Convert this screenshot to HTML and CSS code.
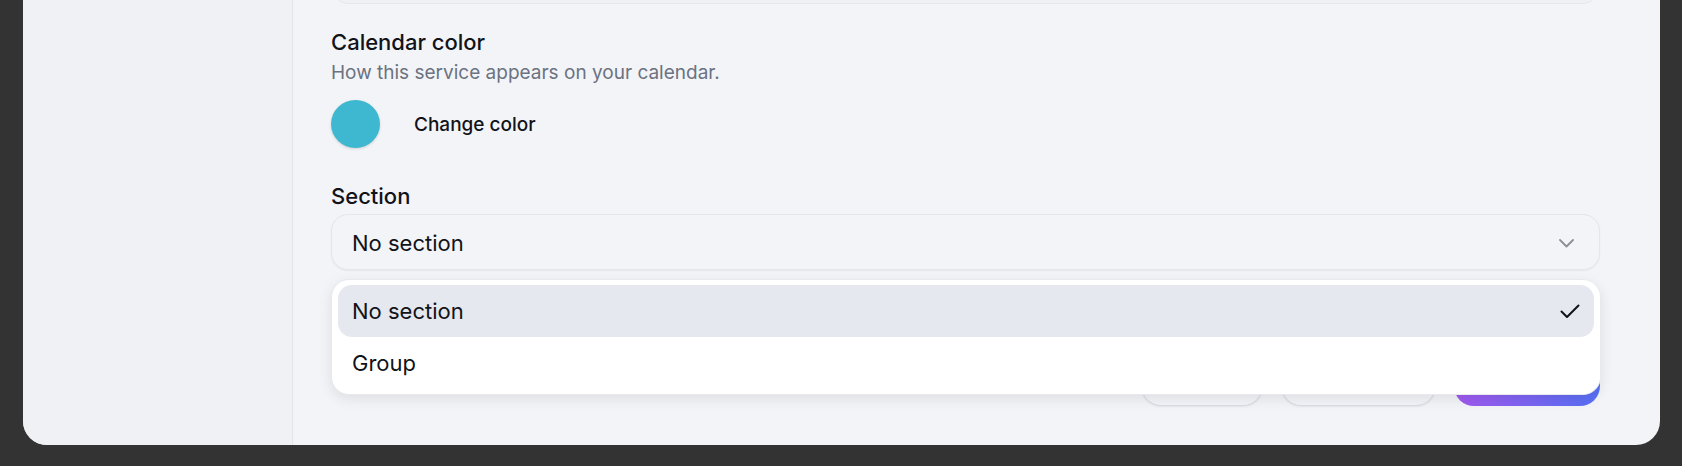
FILE: index.html
```html
<!DOCTYPE html>
<html lang="en">
<head>
<meta charset="UTF-8" />
<meta name="viewport" content="width=device-width, initial-scale=1" />
<title>Edit service</title>
<link rel="stylesheet" href="styles.css">
</head>
<body>
  <div class="card">
    <aside class="sidebar"></aside>

    <main class="panel">
      <div class="prev-field"></div>

      <section class="field">
        <h3 class="field-title">Calendar color</h3>
        <p class="field-hint">How this service appears on your calendar.</p>
        <div class="color-row">
          <span class="swatch"></span>
          <button class="link-btn" type="button">Change color</button>
        </div>
      </section>

      <section class="field">
        <label class="field-title section-label">Section</label>
        <div class="select-wrap">
          <div class="select">
            <span>No section</span>
            <svg class="chevron" width="15" height="9" viewBox="0 0 15 9">
              <path d="M1 1 L7.5 7.5 L14 1" fill="none" stroke="#8b8f98" stroke-width="1.8" stroke-linecap="round" stroke-linejoin="round"/>
            </svg>
          </div>
          <ul class="menu">
            <li class="option selected">
              <span>No section</span>
              <svg class="check" width="20" height="15" viewBox="0 0 20 15">
                <path d="M1.5 7.5 L7 13 L18.5 1.5" fill="none" stroke="#111318" stroke-width="2" stroke-linecap="round" stroke-linejoin="round"/>
              </svg>
            </li>
            <li class="option">Group</li>
          </ul>
        </div>
      </section>

      <div class="actions">
        <button class="btn btn-ghost btn-delete" type="button">Delete</button>
        <button class="btn btn-ghost btn-dup" type="button">Duplicate</button>
        <button class="btn btn-primary" type="button">Save</button>
      </div>
    </main>
  </div>
</body>
</html>
```

FILE: styles.css
```css
* {
  box-sizing: border-box;
}
body {
  margin: 0; padding: 0;
  height: 466px;
  background: #333333;
  font-family: Inter, "Noto Sans", sans-serif;
  color: #111318;
  overflow: hidden;
}
.card {
  display: grid;
  grid-template-columns: 270px 1fr;
  height: 445px;
  margin: 0 22px 0 23px;
  background: #f3f4f8;
  border-radius: 0 0 24px 24px;
  overflow: hidden;
}
.sidebar {
  background: #eff1f5;
  border-right: 1px solid #e3e5ea;
}
.panel {
  display: flex;
  flex-direction: column;
  padding: 0 60px 0 38px;
}

/* bottom edge of the field above, scrolled mostly out of view */
.prev-field {
  height: 40px;
  margin-top: -36px;
  border-bottom: 1px solid #e6e7ec;
  border-radius: 18px;
  background: #eff0f4;
}

.field-title {
  display: block;
  margin: 24px 0 0;
  font-size: 22px;
  line-height: 28px;
  font-weight: 500;
}
.field-hint {
  margin: 4px 0 0;
  font-size: 19px;
  line-height: 26px;
  color: #6b7280;
}
.color-row {
  display: flex;
  align-items: center;
  gap: 34px;
  margin-top: 14px;
}
.swatch {
  width: 49px;
  height: 48px;
  border-radius: 50%;
  background: #3eb8d0;
  box-shadow: 0 1px 3px rgba(0, 0, 0, .14);
}
.link-btn {
  padding: 0;
  border: 0;
  background: none;
  font-family: inherit;
  font-size: 19px;
  font-weight: 500;
  color: #111318;
  cursor: pointer;
}

.section-label {
  margin-top: 34px;
}
.select-wrap {
  position: relative;
  margin-top: 4px;
}
.select {
  display: flex;
  align-items: center;
  justify-content: space-between;
  height: 56px;
  padding: 1px 25px 0 20px;
  border: 1px solid #e4e6eb;
  border-radius: 17px;
  background: #f3f4f8;
  box-shadow: 0 1px 2px rgba(0, 0, 0, .06);
  font-size: 22px;
}
.chevron {
  margin-top: 1px;
}

.menu {
  position: absolute;
  top: calc(100% + 9px);
  left: 0;
  right: -1px;
  z-index: 2;
  margin: 0;
  padding: 5px 6px;
  list-style: none;
  background: #fff;
  border: 1px solid #e8e9ed;
  border-radius: 18px;
  box-shadow: 0 4px 14px rgba(0, 0, 0, .09);
}
.option {
  display: flex;
  align-items: center;
  justify-content: space-between;
  height: 52px;
  padding: 0 14px;
  border-radius: 14px;
  font-size: 22px;
}
.option.selected {
  background: #e5e8ef;
}

.actions {
  display: flex;
  justify-content: flex-end;
  gap: 18px;
  margin-top: 84px;
}
.btn {
  height: 52px;
  border-radius: 20px;
  font-family: inherit;
  font-size: 20px;
  font-weight: 500;
  cursor: pointer;
}
.btn-ghost {
  border: 1px solid #d9dce2;
  background: #f3f4f8;
  color: #111318;
  box-shadow: 0 1px 2px rgba(0, 0, 0, .06);
}
.btn-delete {
  width: 122px;
}
.btn-dup {
  width: 155px;
}
.btn-primary {
  width: 146px;
  border: 0;
  color: #fff;
  background: linear-gradient(to right, #a259f0, #5670f5);
}
```
